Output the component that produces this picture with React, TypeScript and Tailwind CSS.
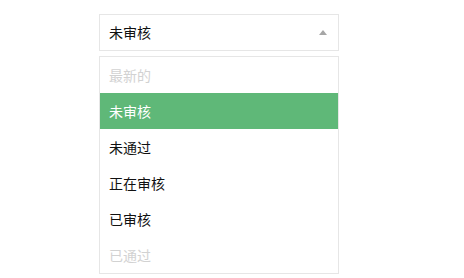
import React from "react";

const items = [
  { label: "最新的", disabled: true },
  { label: "未审核", selected: true },
  { label: "未通过" },
  { label: "正在审核" },
  { label: "已审核" },
  { label: "已通过", disabled: true },
];

export default function App() {
  return (
    <div
      className="w-[464px] h-[278px] bg-white pt-[14px] pl-[99px]"
      style={{ fontFamily: '"Noto Sans CJK SC", "Noto Sans", sans-serif' }}
    >
      <div className="w-[240px] flex flex-col gap-[5px]">
        <div className="h-[37px] border border-[#e6e6e6] flex items-center justify-between pl-[9px] pr-[11px] text-[14px] text-[#111]">
          <span>未审核</span>
          <span className="w-0 h-0 border-l-[4px] border-r-[4px] border-b-[5px] border-l-transparent border-r-transparent border-b-[#a6a6a6] mr-[0px]" />
        </div>
        <div className="border border-[#e6e6e6] flex flex-col">
          {items.map((it) => (
            <div
              key={it.label}
              className={
                "h-[36px] flex items-center pl-[9px] text-[14px] " +
                (it.selected
                  ? "bg-[#5fb878] text-white"
                  : it.disabled
                  ? "text-[#d2d2d2]"
                  : "text-[#111]")
              }
            >
              {it.label}
            </div>
          ))}
        </div>
      </div>
    </div>
  );
}
